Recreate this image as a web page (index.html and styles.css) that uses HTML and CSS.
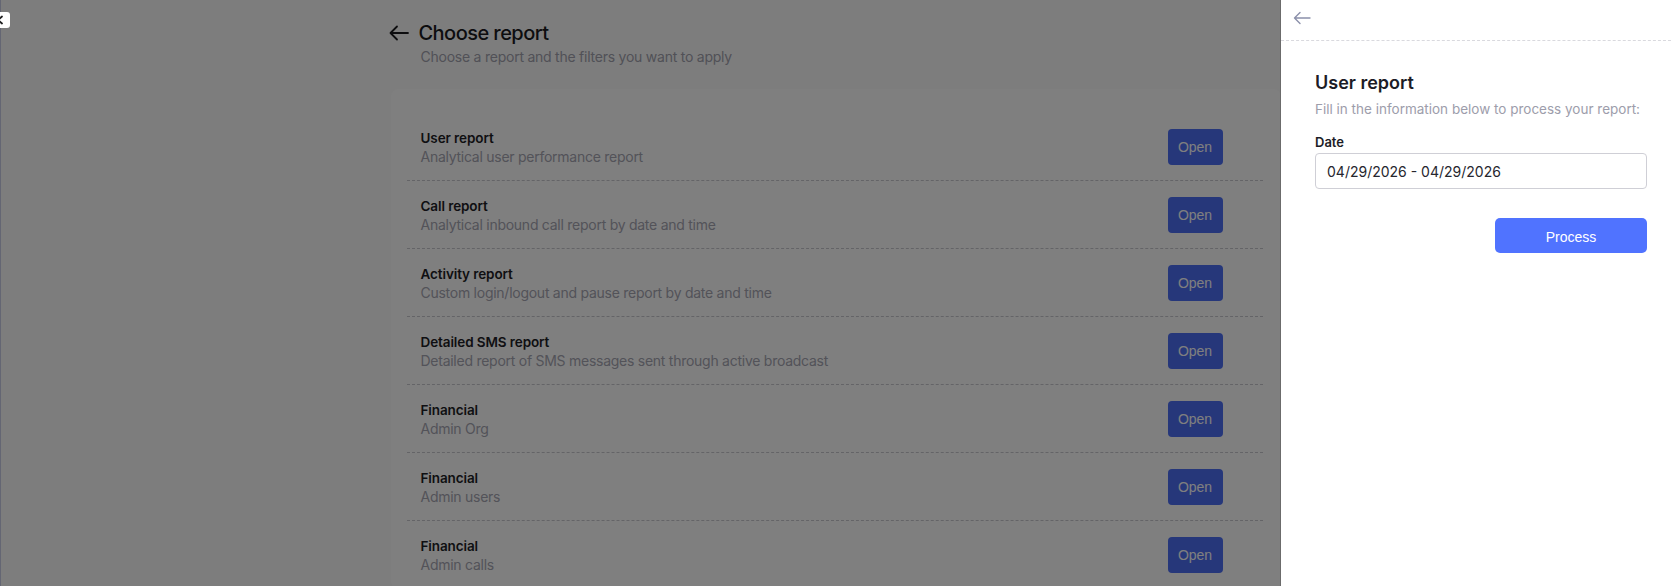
FILE: index.html
```html
<!DOCTYPE html>
<html lang="en">
<head>
<meta charset="utf-8">
<title>Choose report</title>
<link rel="stylesheet" href="styles.css">
</head>
<body>
<div class="sidebar-edge"></div>
<button class="sidebar-toggle" aria-label="Toggle sidebar">
  <svg width="10" height="10" viewBox="0 0 10 10"><path d="M6 1.5 L2 5 L6 8.5" fill="none" stroke="#222" stroke-width="1.8" stroke-linecap="round" stroke-linejoin="round"/></svg>
</button>

<main class="main">
  <header class="page-header">
    <div class="title-row">
      <svg class="back" width="20" height="16" viewBox="0 0 20 16"><path d="M19 8 H2 M8 1.5 L1.5 8 L8 14.5" fill="none" stroke="#1b1b1f" stroke-width="1.8" stroke-linecap="round" stroke-linejoin="round"/></svg>
      <h1 class="page-title">Choose report</h1>
    </div>
    <p class="page-sub">Choose a report and the filters you want to apply</p>
  </header>

  <section class="card">
    <div class="row"><div class="row-text"><div class="row-title">User report</div><div class="row-desc">Analytical user performance report</div></div><button class="open-btn">Open</button></div>
    <div class="row"><div class="row-text"><div class="row-title">Call report</div><div class="row-desc">Analytical inbound call report by date and time</div></div><button class="open-btn">Open</button></div>
    <div class="row"><div class="row-text"><div class="row-title">Activity report</div><div class="row-desc">Custom login/logout and pause report by date and time</div></div><button class="open-btn">Open</button></div>
    <div class="row"><div class="row-text"><div class="row-title">Detailed SMS report</div><div class="row-desc">Detailed report of SMS messages sent through active broadcast</div></div><button class="open-btn">Open</button></div>
    <div class="row"><div class="row-text"><div class="row-title">Financial</div><div class="row-desc">Admin Org</div></div><button class="open-btn">Open</button></div>
    <div class="row"><div class="row-text"><div class="row-title">Financial</div><div class="row-desc">Admin users</div></div><button class="open-btn">Open</button></div>
    <div class="row"><div class="row-text"><div class="row-title">Financial</div><div class="row-desc">Admin calls</div></div><button class="open-btn">Open</button></div>
  </section>
</main>

<div class="overlay"></div>

<aside class="drawer">
  <div class="drawer-head">
    <svg width="18" height="14" viewBox="0 0 18 14"><path d="M17 7 H1.5 M7 1.5 L1.5 7 L7 12.5" fill="none" stroke="#8b90aa" stroke-width="1.4" stroke-linecap="round" stroke-linejoin="round"/></svg>
  </div>
  <div class="drawer-body">
    <h2 class="drawer-title">User report</h2>
    <p class="drawer-sub">Fill in the information below to process your report:</p>
    <label class="field-label" for="date">Date</label>
    <input class="field-input" id="date" type="text" value="04/29/2026 - 04/29/2026">
    <div class="actions"><button class="process-btn">Process</button></div>
  </div>
</aside>
</body>
</html>
```
FILE: styles.css
```css
* { box-sizing: border-box; }
html, body { margin: 0; height: 100%; overflow: hidden; }
body {
  background: #fbfbfb;
  font-family: Inter, "Noto Sans", sans-serif;
  color: #1c1c24;
}

.sidebar-edge {
  position: fixed; left: 0; top: 0; bottom: 0; width: 1px;
  background: #c8cde6; z-index: 5;
}
.sidebar-toggle {
  position: fixed; left: 0; top: 12px; z-index: 30;
  width: 10px; height: 16px; padding: 0; border: 0;
  background: #fff; border-radius: 0 3px 3px 0;
  overflow: hidden; display: flex; align-items: center;
}
.sidebar-toggle svg { margin-left: -4px; display: block; }

.main { width: 890px; margin: 0 auto; padding-top: 19px; }

.page-header { margin-left: -2px; }
.title-row { display: flex; align-items: center; gap: 10px; height: 28px; }
.back { display: block; }
.page-title { margin: 0; font-size: 20px; line-height: 28px; font-weight: 500; color: #1b1b1f; letter-spacing: -0.55px; }
.page-sub { margin: 0 0 0 32px; font-size: 14px; line-height: 20px; color: #a2a2ae; height: 20px; letter-spacing: -0.24px; }

.card {
  margin-top: 22px;
  background: #ffffff;
  border-radius: 8px;
  padding: 24px 18px 0 16px;
}
.row {
  display: flex; align-items: center; justify-content: space-between;
  height: 68px;
  padding: 2px 40px 0 14px;
  border-bottom: 1px dashed #c9c9cf;
}
.row-title { font-size: 13.5px; line-height: 18px; font-weight: 600; color: #1e1e26; letter-spacing: -0.1px; }
.row-desc { font-size: 14px; line-height: 20px; color: #a6a6b2; letter-spacing: -0.26px; }
.open-btn {
  width: 55px; height: 36px; border: 0; border-radius: 4px;
  background: #4c6ef5; color: #fff;
  font-family: "Liberation Sans", Arial, sans-serif; font-size: 14px;
  padding: 0; margin-top: -2px;
}

.overlay { position: fixed; inset: 0; background: rgba(0,0,0,0.5); z-index: 10; }

.drawer {
  position: fixed; top: 0; right: 0; bottom: 0; width: 391px;
  background: #fff; z-index: 20;
  border-left: 1px solid #6b6b6b;
}
.drawer-head {
  height: 41px; display: flex; align-items: center;
  padding-left: 12px;
  border-bottom: 1px dashed #d9d9de;
}
.drawer-head svg { display: block; margin-top: -4px; }
.drawer-body { padding: 30px 24px 0 34px; }
.drawer-title { margin: 0; font-size: 18px; line-height: 24px; font-weight: 600; color: #1c1c26; }
.drawer-sub { margin: 4px 0 0; font-size: 13.5px; line-height: 20px; color: #9d9dab; }
.field-label { display: block; margin-top: 14px; font-size: 13px; line-height: 18px; font-weight: 600; color: #1c1c26; }
.field-input {
  display: block; width: 100%; margin-top: 2px;
  height: 36px; padding: 0 11px;
  border: 1px solid #cfcfd6; border-radius: 4px;
  font-family: Inter, "Noto Sans", sans-serif; font-size: 14px; color: #26262e;
  background: #fff; outline: none;
}
.actions { display: flex; justify-content: flex-end; margin-top: 29px; }
.process-btn {
  width: 152px; height: 35px; border: 0; border-radius: 5px;
  background: #5073ff; color: #fff;
  font-family: "Liberation Sans", Arial, sans-serif; font-size: 14px;
  padding-top: 3px;
}
```
